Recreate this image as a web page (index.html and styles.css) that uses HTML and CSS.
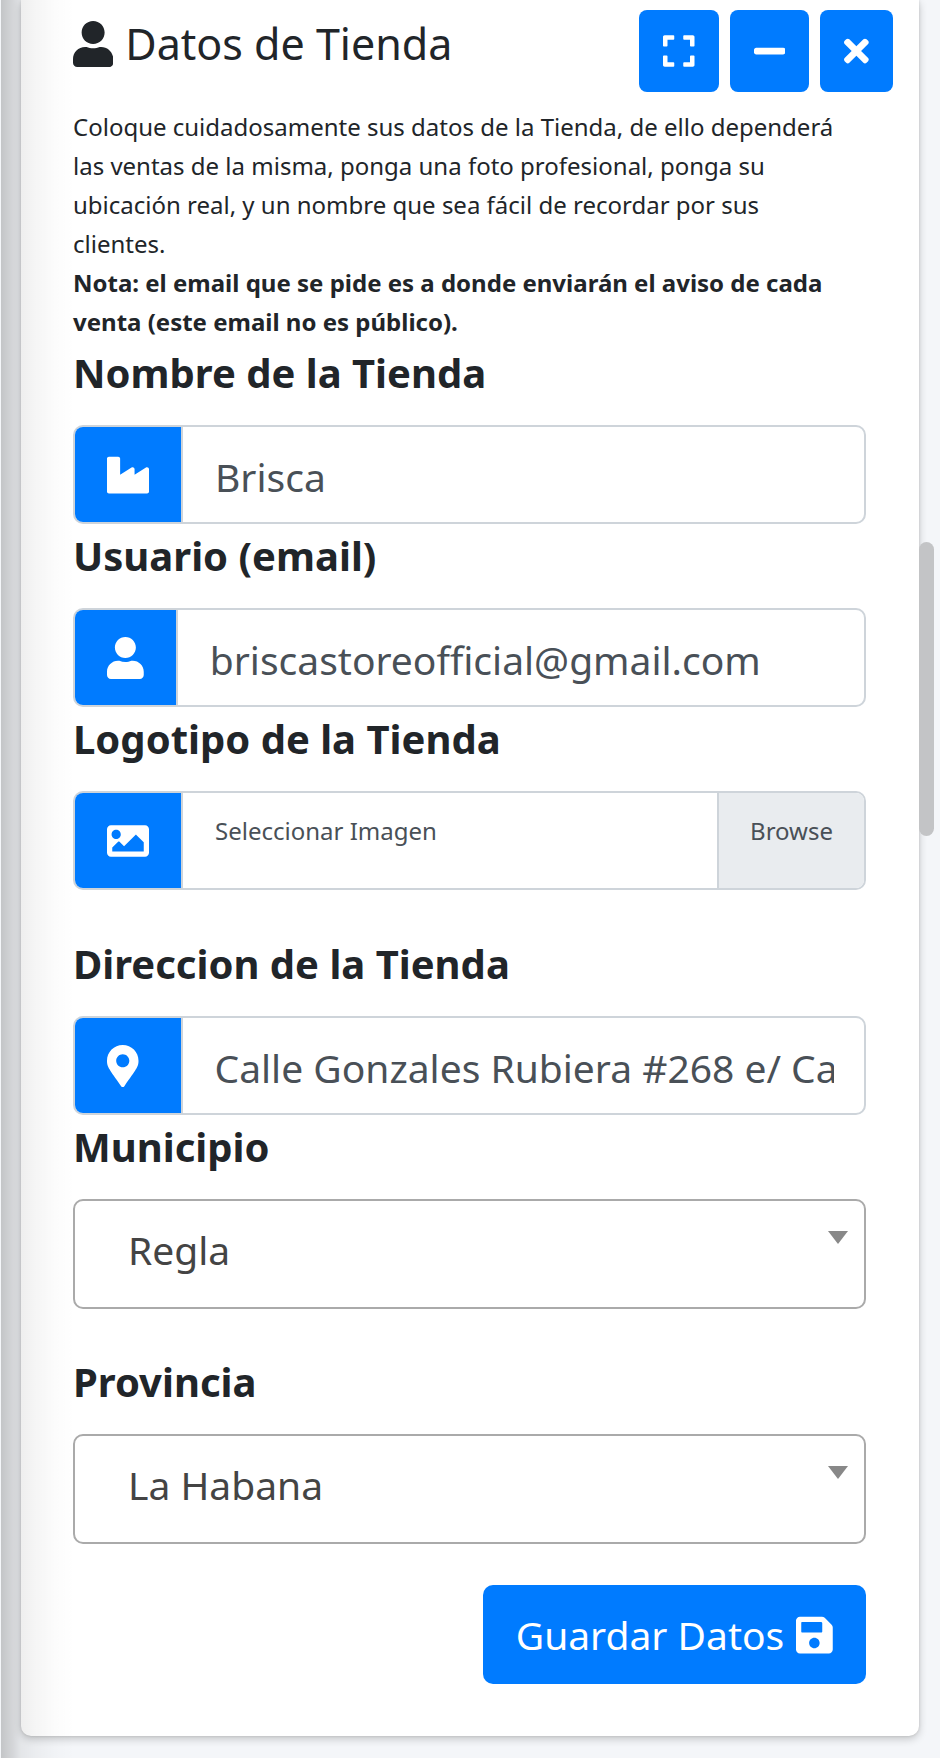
FILE: index.html
```html
<!DOCTYPE html>
<html lang="es">
<head>
<meta charset="utf-8">
<meta name="viewport" content="width=device-width, initial-scale=1">
<title>Datos de Tienda</title>
<link rel="stylesheet" href="styles.css">
</head>
<body>
<main class="page">
  <section class="card">
    <header class="card-header">
      <h1 class="card-title">
        <svg class="icon title-icon" viewBox="0 0 448 512" aria-hidden="true"><path d="M224 256c70.7 0 128-57.3 128-128S294.7 0 224 0 96 57.3 96 128s57.3 128 128 128zm89.6 32h-16.7c-22.2 10.2-46.9 16-72.9 16s-50.6-5.8-72.9-16h-16.7C60.2 288 0 348.2 0 422.4V464c0 26.5 21.5 48 48 48h352c26.5 0 48-21.5 48-48v-41.6c0-74.2-60.2-134.4-134.4-134.4z"/></svg>
        <span>Datos de Tienda</span>
      </h1>
      <div class="tools">
        <button class="tool" type="button" aria-label="Maximizar"><svg class="icon" viewBox="0 0 448 512" aria-hidden="true"><path d="M0 180V56c0-13.300 10.700-24 24-24h124c6.600 0 12 5.400 12 12v40c0 6.600-5.400 12-12 12H64v84c0 6.600-5.400 12-12 12H12c-6.600 0-12-5.400-12-12zM288 44v40c0 6.600 5.400 12 12 12h84v84c0 6.600 5.400 12 12 12h40c6.600 0 12-5.400 12-12V56c0-13.300-10.700-24-24-24H300c-6.600 0-12 5.400-12 12zm148 276h-40c-6.600 0-12 5.400-12 12v84h-84c-6.600 0-12 5.400-12 12v40c0 6.600 5.400 12 12 12h124c13.300 0 24-10.700 24-24V332c0-6.600-5.400-12-12-12zM160 468v-40c0-6.600-5.400-12-12-12H64v-84c0-6.600-5.400-12-12-12H12c-6.600 0-12 5.400-12 12v124c0 13.300 10.700 24 24 24h124c6.600 0 12-5.400 12-12z"/></svg></button>
        <button class="tool" type="button" aria-label="Minimizar"><svg class="icon" viewBox="0 0 448 512" aria-hidden="true"><path d="M416 208H32c-17.670 0-32 14.330-32 32v32c0 17.670 14.330 32 32 32h384c17.670 0 32-14.330 32-32v-32c0-17.670-14.330-32-32-32z"/></svg></button>
        <button class="tool" type="button" aria-label="Cerrar"><svg class="icon" viewBox="0 0 352 512" aria-hidden="true"><path d="M242.720 256l100.070-100.070c12.280-12.280 12.280-32.190 0-44.480l-22.240-22.240c-12.280-12.280-32.190-12.280-44.480 0L176 189.280 75.930 89.210c-12.280-12.280-32.190-12.280-44.480 0L9.210 111.450c-12.280 12.280-12.280 32.190 0 44.480L109.280 256 9.210 356.070c-12.280 12.280-12.280 32.190 0 44.480l22.240 22.240c12.280 12.280 32.200 12.280 44.480 0L176 322.720l100.070 100.070c12.280 12.280 32.200 12.280 44.480 0l22.240-22.240c12.280-12.280 12.280-32.190 0-44.480L242.720 256z"/></svg></button>
      </div>
    </header>

    <form class="form">
      <p class="intro">Coloque cuidadosamente sus datos de la Tienda, de ello dependerá las ventas de la misma, ponga una foto profesional, ponga su ubicación real, y un nombre que sea fácil de recordar por sus clientes.<br><strong>Nota: el email que se pide es a donde enviarán el aviso de cada venta (este email no es público).</strong></p>

      <label class="label" for="nombre">Nombre de la Tienda</label>
      <div class="group">
        <span class="addon"><svg class="icon" viewBox="0 0 512 512" aria-hidden="true"><path d="M475.115 163.781L336 252.309v-68.280c0-18.916-20.931-30.399-36.885-20.248L160 252.309V56c0-13.255-10.745-24-24-24H24C10.745 32 0 42.745 0 56v400c0 13.255 10.745 24 24 24h464c13.255 0 24-10.745 24-24V184.029c0-18.917-20.931-30.399-36.885-20.248z"/></svg></span>
        <input class="control" id="nombre" type="text" value="Brisca">
      </div>

      <label class="label" for="email">Usuario (email)</label>
      <div class="group">
        <span class="addon"><svg class="icon" viewBox="0 0 448 512" aria-hidden="true"><path d="M224 256c70.7 0 128-57.3 128-128S294.7 0 224 0 96 57.3 96 128s57.3 128 128 128zm89.6 32h-16.7c-22.2 10.2-46.9 16-72.9 16s-50.6-5.8-72.9-16h-16.7C60.2 288 0 348.2 0 422.4V464c0 26.5 21.5 48 48 48h352c26.5 0 48-21.5 48-48v-41.6c0-74.2-60.2-134.4-134.4-134.4z"/></svg></span>
        <input class="control" id="email" type="email" value="briscastoreofficial@gmail.com">
      </div>

      <label class="label" for="logo">Logotipo de la Tienda</label>
      <div class="group group-spaced">
        <span class="addon"><svg class="icon" viewBox="0 0 512 512" aria-hidden="true"><path d="M464 448H48c-26.510 0-48-21.490-48-48V112c0-26.510 21.490-48 48-48h416c26.510 0 48 21.490 48 48v288c0 26.510-21.490 48-48 48zM112 120c-30.928 0-56 25.072-56 56s25.072 56 56 56 56-25.072 56-56-25.072-56-56-56zM64 384h384V272l-87.515-87.515c-4.686-4.686-12.284-4.686-16.971 0L208 320l-55.515-55.515c-4.686-4.686-12.284-4.686-16.971 0L64 336v48z"/></svg></span>
        <input class="file-input" id="logo" type="file">
        <label class="file" for="logo"><span class="file-name">Seleccionar Imagen</span><span class="file-browse">Browse</span></label>
      </div>

      <label class="label" for="direccion">Direccion de la Tienda</label>
      <div class="group">
        <span class="addon addon-wide"><svg class="icon" viewBox="0 0 384 512" aria-hidden="true"><path d="M172.268 501.670C26.970 291.031 0 269.413 0 192 0 85.961 85.961 0 192 0s192 85.961 192 192c0 77.413-26.970 99.031-172.268 309.670-9.535 13.774-29.930 13.773-39.464 0zM192 272c44.183 0 80-35.817 80-80s-35.817-80-80-80-80 35.817-80 80 35.817 80 80 80z"/></svg></span>
        <input class="control" id="direccion" type="text" value="Calle Gonzales Rubiera #268 e/ Calixto García">
      </div>

      <label class="label" for="municipio">Municipio</label>
      <div class="select-wrap">
        <select class="select" id="municipio"><option>Regla</option></select>
      </div>

      <label class="label" for="provincia">Provincia</label>
      <div class="select-wrap">
        <select class="select" id="provincia"><option>La Habana</option></select>
      </div>

      <div class="actions">
        <button class="save" type="submit"><span>Guardar Datos</span><svg class="icon" viewBox="0 0 448 512" aria-hidden="true"><path d="M433.941 129.941l-83.882-83.882A48 48 0 0 0 316.118 32H48C21.490 32 0 53.490 0 80v352c0 26.510 21.490 48 48 48h352c26.510 0 48-21.490 48-48V163.882a48 48 0 0 0-14.059-33.941zM224 416c-35.346 0-64-28.654-64-64 0-35.346 28.654-64 64-64s64 28.654 64 64c0 35.346-28.654 64-64 64zm96-304.520V212c0 6.627-5.373 12-12 12H76c-6.627 0-12-5.373-12-12V108c0-6.627 5.373-12 12-12h228.520c3.183 0 6.235 1.264 8.485 3.515l3.480 3.480A11.996 11.996 0 0 1 320 111.480z"/></svg></button>
      </div>
    </form>
  </section>
  <div class="edge-shade"></div>
  <div class="scroll-thumb"></div>
</main>
</body>
</html>
```
FILE: styles.css
```css
*, *::before, *::after { box-sizing: border-box; }

body {
  margin: 0;
  background: #f4f6f9;
  color: #212529;
  font-family: "Noto Sans", "Open Sans", sans-serif;
  font-size: 24px;
  line-height: 39px;
}

button, input, select { font: inherit; color: inherit; margin: 0; }

.page {
  position: relative;
  padding: 0 21px 23px;
  overflow: hidden;
}

.card {
  background: #fff;
  border-radius: 0 0 10px 10px;
  box-shadow: 0 0 3px rgba(0, 0, 0, .125), 0 3px 8px rgba(0, 0, 0, .2);
}

.icon { display: block; height: 1em; fill: currentColor; flex: none; }

.card-header {
  display: flex;
  justify-content: space-between;
  align-items: flex-start;
  padding: 10px 26px 0 52px;
}

.card-title {
  display: flex;
  align-items: center;
  gap: 12px;
  margin: 0;
  font-size: 43px;
  font-weight: 400;
  line-height: 68px;
}

.title-icon { height: 46px; }

.tools { display: flex; gap: 11px; }

.tool {
  padding: 23px 24px;
  border: 0;
  border-radius: 8px;
  background: #007bff;
  color: #fff;
  font-size: 36px;
}

.form { padding: 15px 53px 52px 52px; }

.intro { margin: 0; padding-right: 16px; }

.label {
  display: block;
  margin-bottom: 20px;
  font-size: 40px;
  font-weight: 700;
  line-height: 64px;
}

.group {
  position: relative;
  display: flex;
  height: 99px;
  border: 2px solid #ced4da;
  border-radius: 10px;
  background: #fff;
  overflow: hidden;
}

.group-spaced { margin-bottom: 42px; }

.addon {
  display: flex;
  align-items: center;
  padding: 0 32px;
  border-right: 2px solid #ced4da;
  background: #007bff;
  color: #fff;
  font-size: 42px;
}

.addon-wide { padding-right: 42px; }

.control {
  flex: 1;
  min-width: 0;
  margin: 0 30px 0 32px;
  padding: 4px 0 0;
  border: 0;
  outline: 0;
  background: transparent;
  color: #495057;
  font-size: 39px;
}

.file-input { position: absolute; width: 1px; height: 1px; opacity: 0; }

.file { display: flex; flex: 1; color: #495057; }

.file-name { flex: 1; padding: 18px 32px; }

.file-browse {
  padding: 18px 31px;
  border-left: 2px solid #ced4da;
  background: #e9ecef;
}

.select-wrap { position: relative; margin-bottom: 41px; }

.select-wrap::after {
  content: "";
  position: absolute;
  top: 32px;
  right: 18px;
  border: 10px solid transparent;
  border-top: 13px solid #888;
  border-bottom: 0;
  pointer-events: none;
}

.select {
  display: block;
  width: 100%;
  height: 110px;
  padding: 0 53px 8px;
  border: 2px solid #aaa;
  border-radius: 10px;
  background: #fff;
  color: #444;
  font-size: 39px;
  line-height: 64px;
  appearance: none;
}

.actions { display: flex; justify-content: flex-end; }

.save {
  display: flex;
  align-items: center;
  gap: 12px;
  height: 99px;
  padding: 0 33px;
  border: 0;
  border-radius: 10px;
  background: #007bff;
  color: #fff;
  font-size: 39px;
}

.save .icon { font-size: 42px; }

.edge-shade {
  position: absolute;
  inset: 0 auto 0 1px;
  width: 74px;
  background: linear-gradient(to right, rgba(0, 0, 0, .2), rgba(0, 0, 0, .13) 12px, rgba(0, 0, 0, .065) 20px, rgba(0, 0, 0, .04) 34px, rgba(0, 0, 0, .01) 55px, transparent);
  pointer-events: none;
}

.scroll-thumb {
  position: absolute;
  top: 542px;
  right: 6px;
  width: 15px;
  height: 294px;
  border-radius: 8px;
  background: #c3c4c6;
}
```
